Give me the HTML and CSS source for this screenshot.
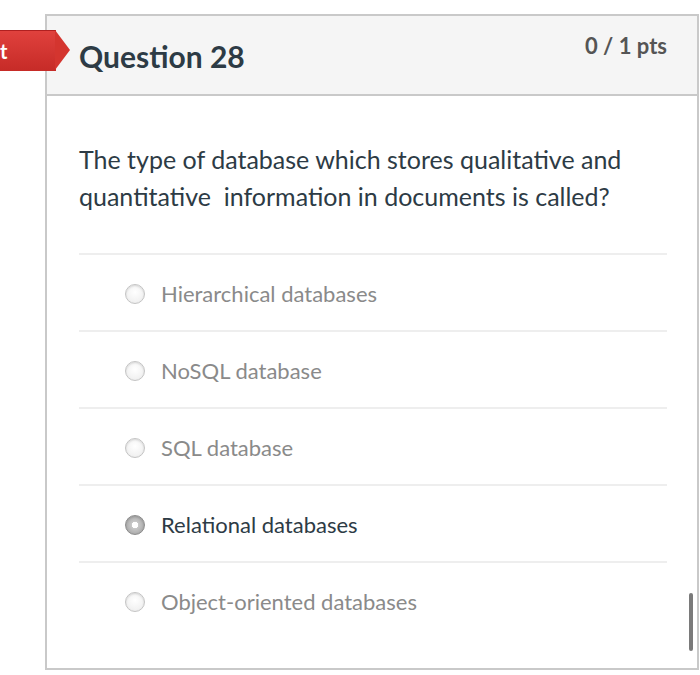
FILE: index.html
```html
<!DOCTYPE html>
<html>
<head>
<meta charset="utf-8">
<link rel="stylesheet" href="styles.css">
</head>
<body>
<div class="page">
  <div class="card">
    <div class="card-header">
      <h2 class="q-title">Question 28</h2>
      <div class="q-pts">0 / 1 pts</div>
    </div>
    <div class="card-body">
      <p class="q-text">The type of database which stores qualitative and quantitative&nbsp; information in documents is called?</p>
      <ul class="answers">
        <li class="answer"><span class="radio"></span><span class="label">Hierarchical databases</span></li>
        <li class="answer"><span class="radio"></span><span class="label">NoSQL database</span></li>
        <li class="answer"><span class="radio"></span><span class="label">SQL database</span></li>
        <li class="answer selected"><span class="radio"></span><span class="label">Relational databases</span></li>
        <li class="answer"><span class="radio"></span><span class="label">Object-oriented databases</span></li>
      </ul>
    </div>
  </div>
  <div class="tab"><span class="tab-text">t</span></div>
  <div class="scrollbar"></div>
</div>
</body>
</html>
```
FILE: styles.css
```css
html, body {
  margin: 0;
  padding: 0;
  background: #fff;
}
body {
  font-family: Lato, "Liberation Sans", sans-serif;
  width: 700px;
  height: 675px;
  overflow: hidden;
}
.page {
  position: relative;
  width: 700px;
  height: 675px;
  padding: 14px 0 0 45px;
  box-sizing: border-box;
}
.card {
  width: 654px;
  height: 656px;
  box-sizing: border-box;
  border: 2px solid #c9c9c9;
  display: flex;
  flex-direction: column;
}
.card-header {
  background: #f5f5f5;
  height: 78px;
  border-bottom: 2px solid #c9c9c9;
  display: flex;
  justify-content: space-between;
  align-items: flex-start;
  padding: 0 30px 0 32px;
  flex-shrink: 0;
}
.q-title {
  margin: 22px 0 0 0;
  font-size: 30px;
  font-weight: 700;
  color: #2d3b45;
  line-height: 36px;
}
.q-pts {
  margin-top: 16px;
  font-size: 22px;
  font-weight: 700;
  color: #555;
  line-height: 28px;
}
.card-body {
  padding: 0 30px 0 32px;
}
.q-text {
  margin: 45px 0 0 0;
  font-size: 25px;
  line-height: 37px;
  color: #2d3b45;
  width: 580px;
}
.answers {
  list-style: none;
  margin: 38px 0 0 0;
  padding: 0;
}
.answer {
  height: 77px;
  box-sizing: border-box;
  border-top: 2px solid #eeeeee;
  display: flex;
  align-items: center;
  padding-left: 46px;
  padding-top: 2px;
}
.radio {
  width: 20px;
  height: 20px;
  box-sizing: border-box;
  border-radius: 50%;
  border: 1px solid #c4c4c4;
  background: radial-gradient(circle at 50% 40%, #ffffff 0%, #ebebeb 100%);
  margin-right: 16px;
  flex-shrink: 0;
  box-shadow: inset 0 1px 2px rgba(0,0,0,0.12);
}
.label {
  font-size: 22px;
  color: #8a8a8a;
  line-height: 26px;
}
.selected .label {
  color: #2d3b45;
}
.selected .radio {
  border: 1px solid #8c8c8c;
  background: radial-gradient(circle at 50% 50%, #ffffff 0, #ffffff 3px, #c8c8c8 3.5px, #9a9a9a 100%);
}
.tab {
  position: absolute;
  left: 0;
  top: 30px;
  width: 56px;
  height: 41px;
  background: linear-gradient(#e0413d, #c62b27);
  border-top: 1px solid #b02020;
  box-sizing: border-box;
  display: flex;
  align-items: center;
}
.tab::after {
  content: "";
  position: absolute;
  left: 55px;
  top: -1px;
  border-top: 20.5px solid transparent;
  border-bottom: 20.5px solid transparent;
  border-left: 15px solid #d4352f;
}
.tab-text {
  color: #fff;
  font-size: 20px;
  font-weight: 700;
  margin-left: 0;
}
.scrollbar {
  position: absolute;
  left: 689px;
  top: 593px;
  width: 4px;
  height: 58px;
  border-radius: 2px;
  background: #7a7a7a;
}
```
